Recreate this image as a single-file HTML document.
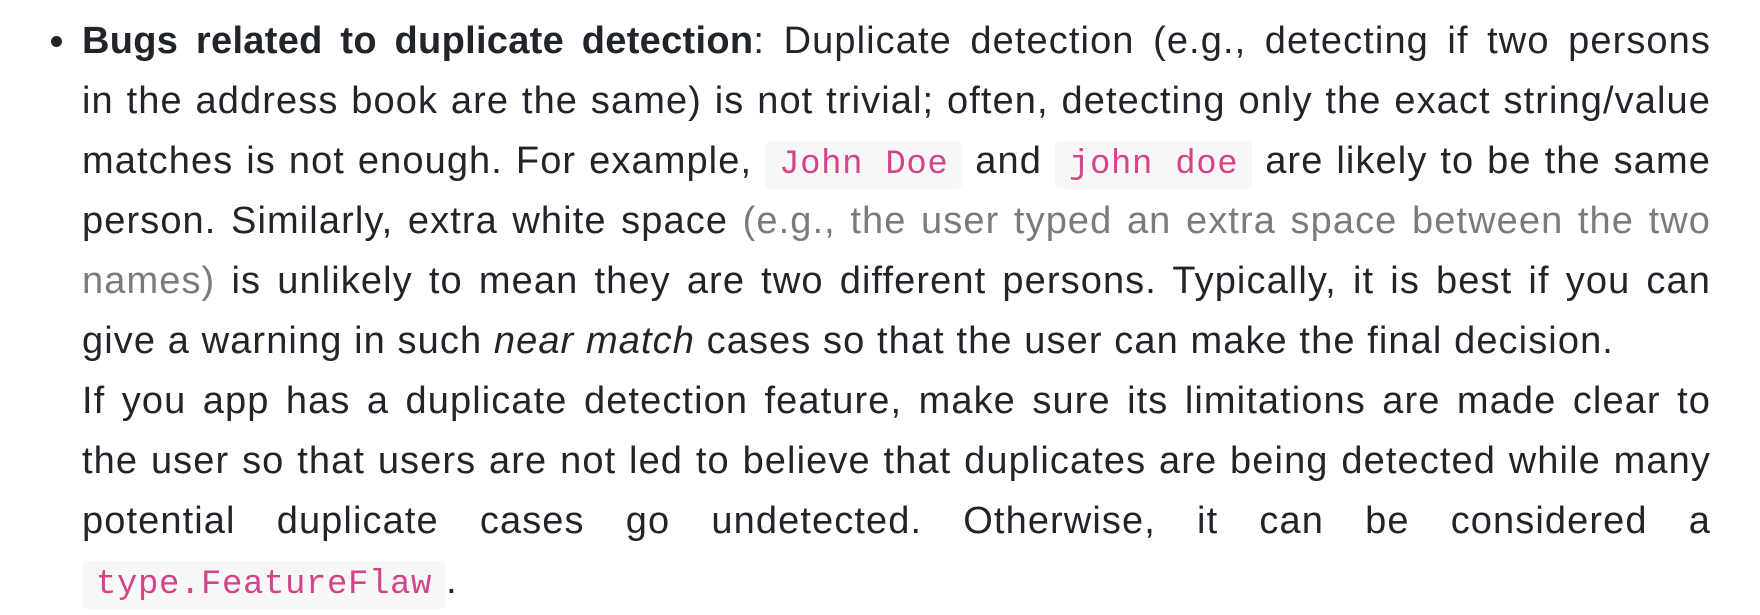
<!DOCTYPE html>
<html><head><meta charset="utf-8"><style>
html,body{margin:0;padding:0;background:#fff;width:1760px;height:600px;overflow:hidden}
body{font-family:"Liberation Sans",Arial,sans-serif;font-size:38px;letter-spacing:1.1px;color:#212529}
b{letter-spacing:0.3px}
.wrap{position:absolute;left:82px;top:11px;width:1629px}
.l{display:block;height:60px;line-height:60px;text-align:justify;text-align-last:justify;white-space:nowrap}
.bullet{position:absolute;left:51px;top:36px;width:11px;height:11px;border-radius:50%;background:#212529}
code{font-family:"Liberation Mono",monospace;font-size:34px;letter-spacing:0.6px;color:#d6438a;background:#f7f7f7;border-radius:5px;padding:5px 14px}
.g{color:#7b7b7b}
</style></head><body>
<div class="bullet"></div>
<div class="wrap">
<div class="l"><b>Bugs related to duplicate detection</b>: Duplicate detection (e.g., detecting if two persons</div>
<div class="l">in the address book are the same) is not trivial; often, detecting only the exact string/value</div>
<div class="l">matches is not enough. For example, <code>John Doe</code> and <code>john doe</code> are likely to be the same</div>
<div class="l">person. Similarly, extra white space <span class="g">(e.g., the user typed an extra space between the two</span></div>
<div class="l"><span class="g">names)</span> is unlikely to mean they are two different persons. Typically, it is best if you can</div>
<div class="l" style="text-align-last:left">give a warning in such <i>near match</i> cases so that the user can make the final decision.</div>
<div class="l">If you app has a duplicate detection feature, make sure its limitations are made clear to</div>
<div class="l">the user so that users are not led to believe that duplicates are being detected while many</div>
<div class="l">potential duplicate cases go undetected. Otherwise, it can be considered a</div>
<div class="l" style="text-align-last:left"><code>type.FeatureFlaw</code>.</div>
</div>
</body></html>
